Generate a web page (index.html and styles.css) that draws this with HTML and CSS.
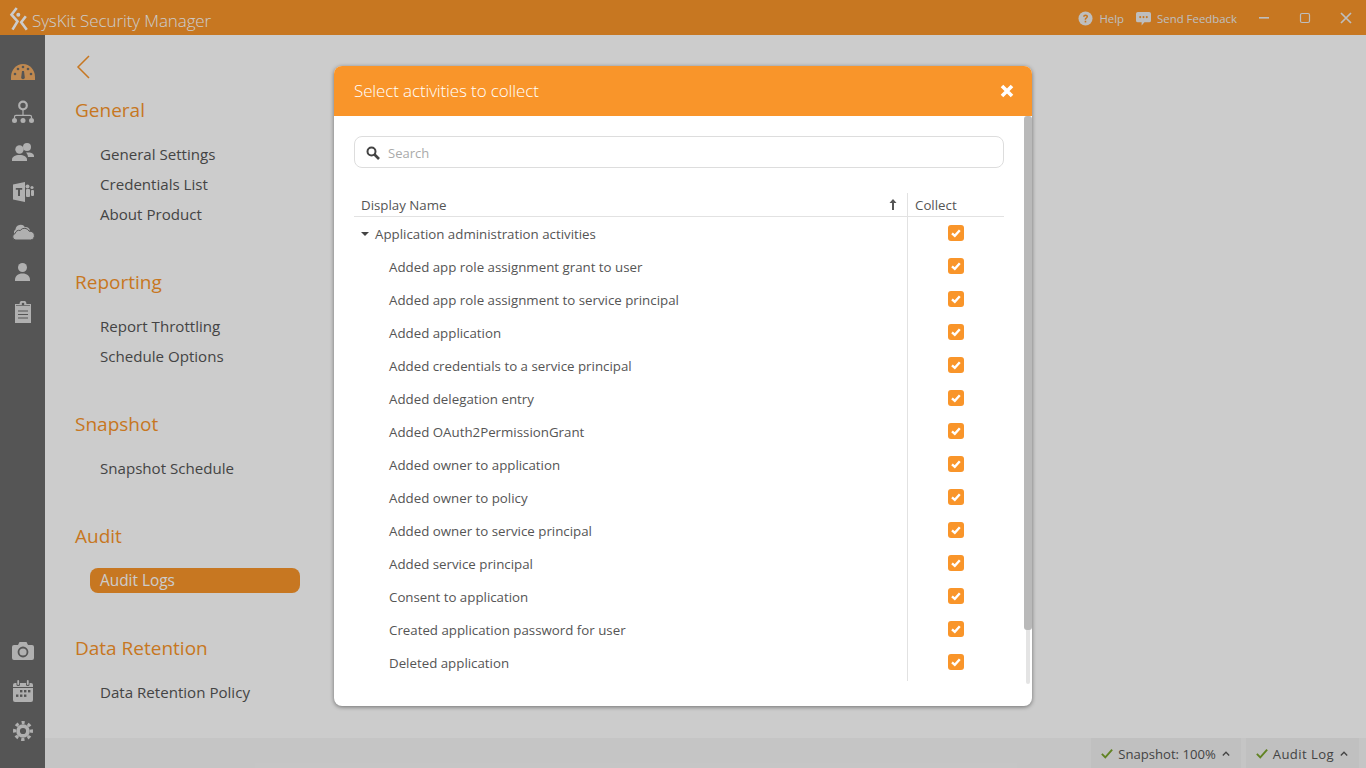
FILE: index.html
```html
<!DOCTYPE html>
<html>
  <head>
    <meta charset="UTF-8" />
    <title>SysKit Security Manager</title>
    <link rel="stylesheet" href="styles.css">
  </head>
  <body>
    <div class="title_bar">
      <svg class="logo" width="20" height="26" viewBox="0 0 20 26">
        <path d="M7.700 2L2.500 8.700l6 6.600-5 8.400" fill="none" stroke="#fff" stroke-width="2.600"/>
        <circle cx="9.300" cy="8.700" r="2" fill="#fff"/>
        <path d="M16.800 10.300l-4.600 6 5.600 7.400" fill="none" stroke="#fff" stroke-width="2.600"/>
      </svg>
      <span class="app_name">SysKit Security Manager</span>
      <div class="title_actions">
        <span class="title_link">
          <svg width="15" height="15" viewBox="0 0 16 16"><circle cx="8" cy="8" r="7.500" fill="currentColor"/><path d="M5.400 6.200c.1-1.600 1.200-2.500 2.700-2.500s2.600.9 2.600 2.200c0 1-.6 1.500-1.300 2-.6.4-.8.7-.8 1.300H7.100c0-1 .3-1.500 1-2 .6-.4.9-.7.9-1.200s-.4-.8-.9-.8c-.6 0-1 .4-1.100 1z" fill="#f9952a"/><rect x="7.100" y="10.400" width="1.700" height="1.800" fill="#f9952a"/></svg>
          Help
        </span>
        <span class="title_link feedback">
          <svg width="15" height="15" viewBox="0 0 16 16"><path d="M2 1h12a2 2 0 0 1 2 2v7a2 2 0 0 1-2 2H9l-3 3.500V12H2a2 2 0 0 1-2-2V3a2 2 0 0 1 2-2z" fill="currentColor"/><circle cx="4.500" cy="6.500" r="1.100" fill="#f9952a"/><circle cx="8" cy="6.500" r="1.100" fill="#f9952a"/><circle cx="11.500" cy="6.500" r="1.100" fill="#f9952a"/></svg>
          Send Feedback
        </span>
        <svg class="win_btn win_min" width="12" height="12" viewBox="0 0 12 12"><rect x="1" y="5" width="10" height="1.600" fill="currentColor"/></svg>
        <svg class="win_btn win_max" width="12" height="12" viewBox="0 0 12 12"><rect x="1.500" y="1.500" width="9" height="9" rx="1.500" fill="none" stroke="currentColor" stroke-width="1.200"/></svg>
        <svg class="win_btn win_close" width="12" height="12" viewBox="0 0 12 12"><path d="M1 1l10 10M11 1L1 11" stroke="currentColor" stroke-width="1.700" fill="none"/></svg>
      </div>
    </div>

    <div class="main">
      <div class="side_bar">
        <div class="side_group">
          <div class="side_icon active">
            <svg width="24" height="16" viewBox="0 0 24 16"><path d="M0 16v-3C0 5.800 5.400 0 12 0s12 5.800 12 13v3z" fill="currentColor"/><g fill="#6b6b6b"><circle cx="4" cy="10" r="1.300"/><circle cx="7" cy="5" r="1.300"/><circle cx="12" cy="3" r="1.300"/><circle cx="17" cy="5" r="1.300"/><circle cx="20" cy="10" r="1.300"/><path d="M11 7h2l.8 6.500a1.800 1.800 0 1 1-3.600 0z"/></g></svg>
          </div>
          <div class="side_icon">
            <svg width="24" height="24" viewBox="0 0 24 24"><circle cx="12" cy="5.500" r="3.800" fill="none" stroke="currentColor" stroke-width="2.200"/><path d="M12 9.500v6M3.500 18v-1.200a1.500 1.500 0 0 1 1.500-1.500h14a1.500 1.500 0 0 1 1.500 1.500V18" fill="none" stroke="currentColor" stroke-width="1.200"/><circle cx="3.500" cy="20.500" r="2.500" fill="currentColor"/><circle cx="12" cy="20.500" r="2.500" fill="currentColor"/><circle cx="20.500" cy="20.500" r="2.500" fill="currentColor"/></svg>
          </div>
          <div class="side_icon">
            <svg width="22" height="20" viewBox="0 0 22 20"><circle cx="15" cy="5" r="4" fill="currentColor"/><path d="M14 10.500h2.500c3 0 5.500 1.500 5.500 3.500v1h-6c-.2-2-.8-3.300-2-4.500z" fill="currentColor"/><circle cx="7.500" cy="7.500" r="4.200" fill="currentColor"/><path d="M0 19v-1.500C0 15 3 13 7.500 13S15 15 15 17.500V19z" fill="currentColor"/></svg>
          </div>
          <div class="side_icon">
            <svg width="22" height="22" viewBox="0 0 22 22"><path d="M1 3.500L13 1v20L1 18.500z" fill="currentColor"/><path d="M3.800 7h6.400v1.800H8V15H6V8.800H3.800z" fill="#6b6b6b"/><rect x="14" y="8" width="4" height="8" rx="1" fill="currentColor"/><circle cx="15.500" cy="5.500" r="2" fill="currentColor"/><circle cx="20" cy="6.500" r="1.600" fill="currentColor"/><rect x="19" y="9" width="3" height="6" rx="1" fill="currentColor"/></svg>
          </div>
          <div class="side_icon">
            <svg width="24" height="16" viewBox="0 0 24 16"><path d="M3.800 10.500a3.300 3.300 0 0 1 .7-5A5.200 5.200 0 0 1 14 3.200 4.200 4.200 0 0 1 19 6.500" fill="currentColor"/><path d="M4.800 16a3.300 3.300 0 0 1-.6-6.500 3.800 3.800 0 0 1 5-3 5.200 5.200 0 0 1 9 .8A4.400 4.400 0 0 1 19.800 16z" fill="currentColor" stroke="#6b6b6b" stroke-width="1"/></svg>
          </div>
          <div class="side_icon">
            <svg width="15" height="18" viewBox="0 0 15 18"><circle cx="7.500" cy="4.500" r="4.500" fill="currentColor"/><path d="M0 18v-1c0-4 3-6.500 7.500-6.500S15 13 15 17v1z" fill="currentColor"/></svg>
          </div>
          <div class="side_icon">
            <svg width="16" height="22" viewBox="0 0 16 22"><path d="M0 3h4.500a3.500 3.500 0 0 1 7 0H16v19H0z" fill="currentColor"/><circle cx="8" cy="3" r="1.300" fill="#6b6b6b"/><path d="M1 4.500h14" stroke="#6b6b6b" stroke-width=".7"/><path d="M3 10h10M3 13.500h10M3 17h10" stroke="#6b6b6b" stroke-width="1.200"/></svg>
          </div>
        </div>
        <div class="side_group">
          <div class="side_icon">
            <svg width="22" height="18" viewBox="0 0 22 18"><path d="M2 3h4l1.500-3h7L16 3h4a2 2 0 0 1 2 2v11a2 2 0 0 1-2 2H2a2 2 0 0 1-2-2V5a2 2 0 0 1 2-2z" fill="currentColor"/><circle cx="11" cy="10" r="4.500" fill="none" stroke="#6b6b6b" stroke-width="1.800"/></svg>
          </div>
          <div class="side_icon">
            <svg width="20" height="22" viewBox="0 0 20 22"><path d="M2 3h16a2 2 0 0 1 2 2v15a2 2 0 0 1-2 2H2a2 2 0 0 1-2-2V5a2 2 0 0 1 2-2z" fill="currentColor"/><path d="M0 7.500h20" stroke="#6b6b6b"/><g fill="#6b6b6b"><rect x="3.500" y="2" width="3.500" height="4" rx="1.500"/><rect x="13" y="2" width="3.500" height="4" rx="1.500"/></g><g fill="currentColor"><rect x="4.300" y="0" width="1.800" height="5" rx=".9"/><rect x="13.900" y="0" width="1.800" height="5" rx=".9"/></g><g fill="#6b6b6b"><rect x="7" y="10" width="2.400" height="2.400"/><rect x="11" y="10" width="2.400" height="2.400"/><rect x="15" y="10" width="2.400" height="2.400"/><rect x="3" y="14.500" width="2.400" height="2.400"/><rect x="7" y="14.500" width="2.400" height="2.400"/><rect x="11" y="14.500" width="2.400" height="2.400"/></g></svg>
          </div>
          <div class="side_icon">
            <svg width="20" height="20" viewBox="0 0 22 22"><circle cx="11" cy="11" r="7.500" fill="currentColor"/><circle cx="11" cy="11" r="9.300" fill="none" stroke="currentColor" stroke-width="3.400" stroke-dasharray="3.700 3.600" stroke-dashoffset="1.850" transform="rotate(-90 11 11)"/><circle cx="11" cy="11" r="3.400" fill="#6b6b6b"/></svg>
          </div>
        </div>
      </div>

      <div class="content">
        <svg class="back" width="14" height="24" viewBox="0 0 14 24"><path d="M13 1L2 12l11 11" fill="none" stroke="#f9952a" stroke-width="1.500"/></svg>
        <div class="nav_section first">
          <h2>General</h2>
          <ul>
            <li>General Settings</li>
            <li>Credentials List</li>
            <li>About Product</li>
          </ul>
        </div>
        <div class="nav_section">
          <h2>Reporting</h2>
          <ul>
            <li>Report Throttling</li>
            <li>Schedule Options</li>
          </ul>
        </div>
        <div class="nav_section">
          <h2>Snapshot</h2>
          <ul>
            <li>Snapshot Schedule</li>
          </ul>
        </div>
        <div class="nav_section">
          <h2>Audit</h2>
          <ul>
            <li class="selected">Audit Logs</li>
          </ul>
        </div>
        <div class="nav_section">
          <h2>Data Retention</h2>
          <ul>
            <li>Data Retention Policy</li>
          </ul>
        </div>
      </div>
    </div>

    <div class="status_bar">
      <span class="status_btn">
        <svg width="12" height="11" viewBox="0 0 14 12"><path d="M1 6.500l4 4L13 1.500" fill="none" stroke="#7aa42c" stroke-width="2.200"/></svg>
        Snapshot: 100%
        <svg class="caret" width="8" height="5" viewBox="0 0 8 5"><path d="M.8 4.500L4 1.200l3.200 3.300" fill="none" stroke="currentColor" stroke-width="1.300"/></svg>
      </span>
      <span class="status_btn audit_btn">
        <svg width="12" height="11" viewBox="0 0 14 12"><path d="M1 6.500l4 4L13 1.500" fill="none" stroke="#7aa42c" stroke-width="2.200"/></svg>
        Audit Log
        <svg class="caret" width="8" height="5" viewBox="0 0 8 5"><path d="M.8 4.500L4 1.200l3.200 3.300" fill="none" stroke="currentColor" stroke-width="1.300"/></svg>
      </span>
    </div>

    <div class="overlay">
      <div class="modal">
        <div class="modal_head">
          <span>Select activities to collect</span>
          <svg width="14" height="14" viewBox="0 0 14 14"><path d="M2 2l10 10M12 2L2 12" stroke="#fff" stroke-width="3.600" fill="none"/></svg>
        </div>
        <div class="modal_body">
          <div class="modal_inner">
            <div class="search">
              <svg width="14" height="14" viewBox="0 0 14 14"><circle cx="5.500" cy="5.500" r="4" fill="none" stroke="#444" stroke-width="2"/><path d="M8.500 8.500l4.500 4.500" stroke="#444" stroke-width="2.600"/></svg>
              <span>Search</span>
            </div>
            <div class="grid_head">
              <div class="col_name">
                Display Name
                <svg width="8" height="11" viewBox="0 0 8 11"><path d="M4 0L7.500 4H5v7H3V4H.5z" fill="#555"/></svg>
              </div>
              <div class="col_collect">Collect</div>
            </div>
            <div class="grid_row">
              <div class="col_name group"><i class="tree_arrow"></i>Application administration activities</div>
              <div class="col_check"><svg class="check" viewBox="0 0 16 16"><use href="#chk"/></svg></div>
            </div>
            <div class="grid_row"><div class="col_name">Added app role assignment grant to user</div><div class="col_check"><svg class="check" viewBox="0 0 16 16"><use href="#chk"/></svg></div></div>
            <div class="grid_row"><div class="col_name">Added app role assignment to service principal</div><div class="col_check"><svg class="check" viewBox="0 0 16 16"><use href="#chk"/></svg></div></div>
            <div class="grid_row"><div class="col_name">Added application</div><div class="col_check"><svg class="check" viewBox="0 0 16 16"><use href="#chk"/></svg></div></div>
            <div class="grid_row"><div class="col_name">Added credentials to a service principal</div><div class="col_check"><svg class="check" viewBox="0 0 16 16"><use href="#chk"/></svg></div></div>
            <div class="grid_row"><div class="col_name">Added delegation entry</div><div class="col_check"><svg class="check" viewBox="0 0 16 16"><use href="#chk"/></svg></div></div>
            <div class="grid_row"><div class="col_name">Added OAuth2PermissionGrant</div><div class="col_check"><svg class="check" viewBox="0 0 16 16"><use href="#chk"/></svg></div></div>
            <div class="grid_row"><div class="col_name">Added owner to application</div><div class="col_check"><svg class="check" viewBox="0 0 16 16"><use href="#chk"/></svg></div></div>
            <div class="grid_row"><div class="col_name">Added owner to policy</div><div class="col_check"><svg class="check" viewBox="0 0 16 16"><use href="#chk"/></svg></div></div>
            <div class="grid_row"><div class="col_name">Added owner to service principal</div><div class="col_check"><svg class="check" viewBox="0 0 16 16"><use href="#chk"/></svg></div></div>
            <div class="grid_row"><div class="col_name">Added service principal</div><div class="col_check"><svg class="check" viewBox="0 0 16 16"><use href="#chk"/></svg></div></div>
            <div class="grid_row"><div class="col_name">Consent to application</div><div class="col_check"><svg class="check" viewBox="0 0 16 16"><use href="#chk"/></svg></div></div>
            <div class="grid_row"><div class="col_name">Created application password for user</div><div class="col_check"><svg class="check" viewBox="0 0 16 16"><use href="#chk"/></svg></div></div>
            <div class="grid_row last"><div class="col_name">Deleted application</div><div class="col_check"><svg class="check" viewBox="0 0 16 16"><use href="#chk"/></svg></div></div>
          </div>
          <div class="scroll_track"><div class="scroll_thumb"></div></div>
        </div>
      </div>
    </div>

    <svg class="defs" width="0" height="0">
      <symbol id="chk" viewBox="0 0 16 16">
        <rect width="16" height="16" rx="3" fill="#f9952a"/>
        <path d="M4 8.300l2.800 2.500 5-5.600" fill="none" stroke="#fff" stroke-width="2.400"/>
      </symbol>
    </svg>
  </body>
</html>
```

FILE: styles.css
```css
* {
  margin: 0;
  padding: 0;
  box-sizing: border-box;
}
html,
body {
  height: 768px;
  overflow: hidden;
}
body {
  position: relative;
  display: flex;
  flex-direction: column;
  font-family: "Open Sans", "Noto Sans", sans-serif;
  font-size: 14px;
  color: #555;
  background: #fff;
}
li {
  list-style-type: none;
}
.defs {
  position: absolute;
}

/* title bar */
.title_bar {
  flex: none;
  display: flex;
  align-items: center;
  height: 35px;
  padding-left: 9px;
  background: #f9952a;
  color: #fff;
}
.logo {
  margin-top: 2px;
}
.app_name {
  margin-left: 3px;
  margin-top: 5px;
  font-size: 17px;
  font-weight: 300;
  letter-spacing: -0.1px;
}
.title_actions {
  display: flex;
  align-items: center;
  margin-left: auto;
  color: #eee;
}
.title_link {
  display: flex;
  align-items: center;
  gap: 6px;
  padding-top: 1px;
  font-size: 11.4px;
}
.feedback {
  margin-left: 12px;
}
.win_min {
  margin-left: 21px;
}
.win_max {
  margin-left: 29px;
}
.win_close {
  margin-left: 29px;
  margin-right: 14px;
}

/* left side */
.main {
  flex: 1;
  display: flex;
  min-height: 0;
}
.side_bar {
  flex: none;
  width: 45px;
  margin-bottom: -30px;
  position: relative;
  display: flex;
  flex-direction: column;
  justify-content: space-between;
  padding: 17px 0;
  background: #6b6b6b;
  color: #dcdcdc;
}
.side_icon {
  display: flex;
  align-items: center;
  justify-content: center;
  height: 40px;
}
.side_icon.active {
  color: #f0ac64;
}
.content {
  flex: 1;
  padding: 20px 0 0 31px;
}
.back {
  display: block;
}
.nav_section {
  margin-top: 39px;
}
.nav_section.first {
  margin-top: 17px;
}
.nav_section h2 {
  height: 28px;
  line-height: 28px;
  font-size: 19px;
  font-weight: 400;
  color: #f9952a;
  margin-left: -1px;
}
.nav_section ul {
  display: flex;
  flex-direction: column;
  margin-top: 15px;
}
.nav_section li {
  height: 30px;
  line-height: 30px;
  padding-left: 24px;
  font-size: 15.1px;
  color: #555;
}
.nav_section li.selected {
  width: 210px;
  height: 25px;
  line-height: 25px;
  margin: 3px 0 2px 14px;
  padding-left: 10px;
  border-radius: 8px;
  background: #f9952a;
  color: #fff;
  font-size: 15.4px;
}

/* status bar */
.status_bar {
  flex: none;
  display: flex;
  justify-content: flex-end;
  gap: 5px;
  height: 30px;
  padding-right: 7px;
  margin-left: 45px;
  background: #f7f7f7;
}
.status_btn {
  display: flex;
  align-items: center;
  gap: 5px;
  padding: 1px 11px 0 10px;
  font-size: 13.1px;
  background: #f0f0f0;
}
.audit_btn {
  letter-spacing: 0.42px;
}
.status_btn .caret {
  margin-left: 1px;
}

/* dialog */
.overlay {
  position: absolute;
  inset: 0;
  background: rgba(0, 0, 0, 0.2);
}
.modal {
  position: absolute;
  left: 334px;
  top: 66px;
  width: 698px;
  height: 640px;
  display: flex;
  flex-direction: column;
  border-radius: 8px;
  background: #fff;
  box-shadow: 0 1px 4px rgba(0, 0, 0, 0.45);
  overflow: hidden;
}
.modal_head {
  flex: none;
  display: flex;
  align-items: center;
  justify-content: space-between;
  height: 50px;
  padding: 0 18px 1px 20px;
  background: #f9952a;
  color: #fff;
  font-size: 17px;
  font-weight: 300;
  letter-spacing: -0.13px;
}
.modal_body {
  flex: 1;
  position: relative;
  min-height: 0;
}
.modal_inner {
  padding: 20px 28px 0 20px;
}
.search {
  display: flex;
  align-items: center;
  gap: 8px;
  height: 32px;
  padding: 1px 0 0 11px;
  border: 1px solid #ddd;
  border-radius: 8px;
  font-size: 13px;
  color: #aaa;
}
.grid_head {
  display: flex;
  height: 24px;
  margin-top: 25px;
  border-bottom: 1px solid #e2e2e2;
  font-size: 13.3px;
  line-height: 24px;
}
.grid_head .col_name {
  display: flex;
  align-items: center;
  justify-content: space-between;
  width: 554px;
  padding: 0 10px 0 7px;
  border-right: 1px solid #e2e2e2;
}
.col_collect {
  padding-left: 7px;
}
.grid_row {
  display: flex;
  height: 33px;
  font-size: 13.3px;
}
.grid_row.last {
  height: 35px;
}
.grid_row .col_name {
  width: 554px;
  padding-left: 35px;
  line-height: 34px;
  border-right: 1px solid #e2e2e2;
}
.grid_row .col_name.group {
  display: flex;
  align-items: center;
  padding-left: 7px;
}
.tree_arrow {
  width: 0;
  height: 0;
  margin-right: 6px;
  border-left: 4px solid transparent;
  border-right: 4px solid transparent;
  border-top: 4px solid #444;
}
.col_check {
  padding: 8px 0 0 40px;
}
.check {
  display: block;
  width: 16px;
  height: 16px;
}
.scroll_track {
  position: absolute;
  right: 2px;
  top: 0;
  width: 4px;
  height: 568px;
  border-radius: 2px;
  background: #e4e4e4;
}
.scroll_thumb {
  width: 8px;
  height: 514px;
  margin-left: -2px;
  border-radius: 3px;
  background: #b9b9b9;
}
```
